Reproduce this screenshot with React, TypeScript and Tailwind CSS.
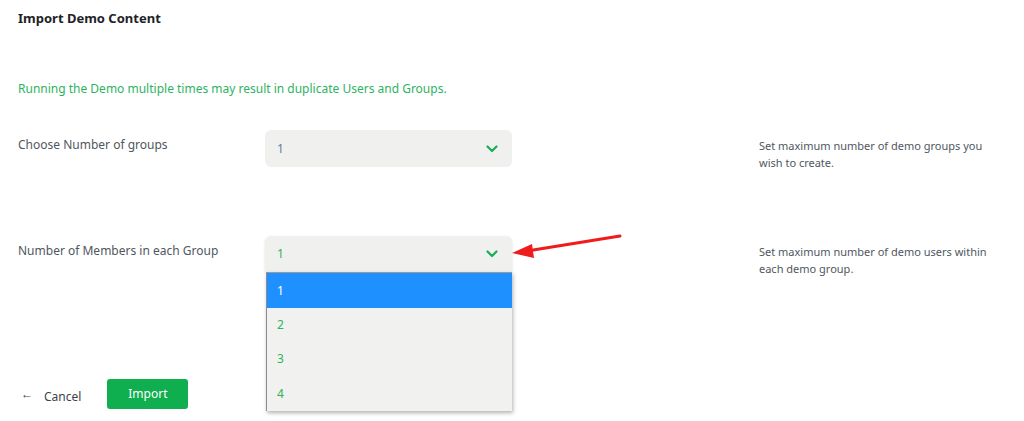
import React from "react";

function Chevron() {
  return (
    <svg width="12" height="8" viewBox="0 0 12 8" className="shrink-0">
      <path d="M1.5 1.5 L6 6 L10.5 1.5" fill="none" stroke="#1aad55" strokeWidth="2.2" strokeLinecap="round" strokeLinejoin="round" />
    </svg>
  );
}

export default function App() {
  const font = { fontFamily: '"Noto Sans", "Open Sans", sans-serif' };
  return (
    <div className="relative w-[1024px] h-[421px] bg-white overflow-hidden" style={font}>
      <div className="pl-[18px] pt-[9px]">
        <h1 className="text-[13px] font-bold text-[#1d2327] leading-[18px]">Import Demo Content</h1>
        <p className="mt-[53px] text-[12px] text-[#2eb35f] leading-[18px]">
          Running the Demo multiple times may result in duplicate Users and Groups.
        </p>

        <div className="mt-[32px] grid grid-cols-[247px_247px_247px_232px] grid-rows-[37px_36px] gap-y-[69px]">
          <div className="pt-[6px] text-[12px] text-[#50575e] leading-[18px]">Choose Number of groups</div>
          <div className="h-[37px] rounded-[6px] bg-[#f0f0ee] flex items-center justify-between pl-[12px] pr-[14px]">
            <span className="text-[12px] text-[#6b7c93]">1</span>
            <Chevron />
          </div>
          <div />
          <div className="pt-[7px] text-[11px] text-[#50575e] leading-[17px]">
            Set maximum number of demo groups you wish to create.
          </div>

          <div className="pt-[6px] text-[12px] text-[#50575e] leading-[18px]">Number of Members in each Group</div>
          <div className="relative">
            <div className="h-[36px] rounded-t-[6px] bg-[#f0f0ee] flex items-center justify-between pl-[12px] pr-[14px] shadow-[0_1px_3px_rgba(0,0,0,0.12)]">
              <span className="text-[12px] text-[#2eb35f]">1</span>
              <Chevron />
            </div>
            <div className="absolute left-[1px] right-0 top-[36px] z-10 bg-[#f1f1ef] border-t border-t-[#9a9a9a] border-l border-l-[#8c8c8c] shadow-[1px_2px_4px_rgba(0,0,0,0.3)]">
              <div className="h-[35px] flex items-center pl-[10px] bg-[#1e90ff] text-[12px] text-white">1</div>
              <div className="h-[34px] flex items-center pl-[10px] text-[12px] text-[#2eb35f]">2</div>
              <div className="h-[34px] flex items-center pl-[10px] text-[12px] text-[#2eb35f]">3</div>
              <div className="h-[35px] flex items-center pl-[10px] text-[12px] text-[#2eb35f]">4</div>
            </div>
          </div>
          <div />
          <div className="pt-[7px] text-[11px] text-[#50575e] leading-[17px]">
            Set maximum number of demo users within each demo group.
          </div>
        </div>

        <div className="mt-[107px] flex items-center">
          <span className="ml-[3px] text-[12px] text-[#3c434a]">←</span>
          <span className="ml-[11px] text-[12px] text-[#3c434a] pt-[5px]">Cancel</span>
          <button className="ml-[26px] w-[81px] h-[30px] rounded-[3px] bg-[#0fae4e] text-white text-[12px]">Import</button>
        </div>
      </div>

      <svg className="absolute left-[505px] top-[228px] z-20" width="125" height="35" viewBox="0 0 125 35">
        <line x1="115" y1="8" x2="22" y2="23" stroke="#ee1c1c" strokeWidth="3" strokeLinecap="round" />
        <polygon points="7,25 27,16 29,30" fill="#ee1c1c" />
      </svg>
    </div>
  );
}
